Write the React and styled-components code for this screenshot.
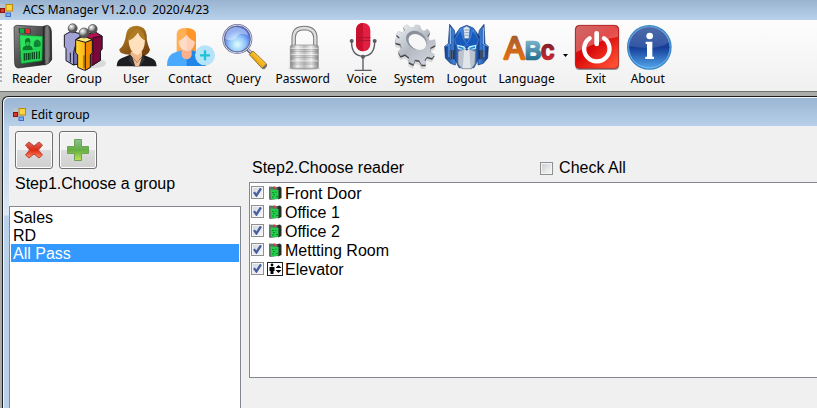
import React, { useState } from 'react'
import styled, { createGlobalStyle } from 'styled-components';

const GlobalStyle = createGlobalStyle`
    body {
        margin: 0;
        background: #a9aca9;
        font-family: "Noto Sans", "Open Sans", sans-serif;
        color: #000;
    }
`;

const MainWindow = styled.div`
    display: flex;
    flex-direction: column;
    min-height: 100vh;
`;

const TitleBar = styled.header`
    display: flex;
    align-items: center;
    gap: 10px;
    height: 20px;
    background: linear-gradient(#99b4d1, #b9d1ea);
    font-size: 12px;
    line-height: 20px;
    white-space: pre;
`;

const ToolBar = styled.nav`
    display: flex;
    height: 71px;
    background: linear-gradient(#fdfdfd, #f0f0f0);
    border-bottom: 1px solid #6f726f;
`;

const Grip = styled.div`
    width: 2px;
    height: 60px;
    margin: 4px 4px 0 0;
    background: repeating-linear-gradient(#b4b4b4 0 2px, transparent 2px 4px);
`;

const ToolButton = styled.button`
    display: flex;
    flex-direction: column;
    align-items: center;
    min-width: 52px;
    padding: 3px 6px 0;
    border: 0;
    background: none;
    font-family: inherit;
    font-size: 12px;
    line-height: 16px;
    color: #000;

    svg {
        width: 48px;
        height: 48px;
        margin: 0 -4px;
    }
`;

const DropArrow = styled.button`
    width: 9px;
    padding: 0;
    border: 0;
    background: none;

    svg {
        display: block;
        margin: 0 auto;
    }
`;

const ChildWindow = styled.section`
    flex: 1;
    display: flex;
    flex-direction: column;
    margin: 4px 0 0 2px;
    padding-left: 6px;
    border: solid #1c1c1c;
    border-width: 1px 0 0 1px;
    border-radius: 6px 0 0 0;
    background: linear-gradient(#99b4d1, #b9d1ea 30px, #dce8f5 118px, #b9d1ea 119px);
    box-shadow: inset 1px 1px #f4f8fc;
`;

const ChildTitle = styled.h1`
    display: flex;
    align-items: center;
    gap: 5px;
    height: 29px;
    margin: 0;
    padding: 6px 0 0 4px;
    box-sizing: border-box;
    font-size: 12px;
    font-weight: normal;
`;

const Content = styled.div`
    flex: 1;
    display: flex;
    gap: 8px;
    background: #f0f0f0;
    font-family: "Liberation Sans", Arial, sans-serif;
    font-size: 16px;
`;

const GroupPane = styled.div`
    display: flex;
    flex-direction: column;
    width: 232px;
`;

const ButtonRow = styled.div`
    display: flex;
    gap: 6px;
    padding: 5px 6px 0;
`;

const ActionButton = styled.button`
    display: flex;
    align-items: center;
    justify-content: center;
    width: 38px;
    height: 38px;
    padding: 0;
    border: 1px solid #707070;
    border-radius: 3px;
    background: linear-gradient(#f2f2f2 50%, #dddddd 50%, #cfcfcf);
    box-shadow: inset 0 0 0 1px #fcfcfc;
`;

const StepLabel = styled.div`
    padding-left: ${props => props.$indent}px;
    line-height: 18px;
`;

const GroupLabel = styled(StepLabel)`
    margin: 6px 0 13px;
`;

const GroupList = styled.div`
    flex: 1;
    display: flex;
    flex-direction: column;
    padding: 1px;
    border: 1px solid #828790;
    border-bottom: 0;
    background: #fff;
`;

const GroupOption = styled.button`
    height: 18px;
    padding: 1px 2px 0;
    border: 0;
    background: ${props => props.$selected ? '#3399ff' : 'none'};
    color: ${props => props.$selected ? '#fff' : '#000'};
    font: inherit;
    line-height: 18px;
    text-align: left;
`;

const ReaderPane = styled.div`
    flex: 1;
    display: flex;
    flex-direction: column;
`;

const ReaderHeader = styled.div`
    display: flex;
    align-items: center;
    gap: 136px;
    padding: 33px 0 5px;
`;

const CheckLabel = styled.label`
    display: flex;
    align-items: center;
    gap: 6px;
    line-height: 18px;
`;

const CheckBox = styled.input`
    appearance: none;
    width: 13px;
    height: 13px;
    margin: 0;
    border: 1px solid #8e8f8f;
    background: linear-gradient(135deg, #cbcfd5, #f6f6f6) content-box;
    padding: 1px;
    box-shadow: inset 0 0 0 1px #f4f4f4;

    &:checked {
        background: url("data:image/svg+xml,%3Csvg xmlns='http://www.w3.org/2000/svg' viewBox='0 0 11 11'%3E%3Cpath d='M2.5 5.2 4.6 8 8.4 2' fill='none' stroke='%23485f9f' stroke-width='2'/%3E%3C/svg%3E") border-box, linear-gradient(135deg, #d3d8e2, #f6f6f6) content-box;
    }
`;

const ReaderList = styled.div`
    height: 192px;
    padding: 1px;
    border: 1px solid #828790;
    border-right: 0;
    background: #fff;
`;

const ReaderRow = styled.label`
    display: flex;
    align-items: center;
    height: 19px;

    ${CheckBox} {
        margin-bottom: 2px;
    }

    svg {
        margin: 0 2px 2px 3px;
    }
`;

const FormIcon = () => (
    <svg width="13" height="13" viewBox="0 0 13 13">
        <rect width="13" height="13" fill="#c9c7c4" opacity=".5" />
        <rect x=".5" y="4.5" width="4" height="4" fill="#d5392b" stroke="#8c1410" />
        <rect x="6" y=".5" width="6.5" height="6.5" fill="#fbd343" stroke="#b98a10" />
        <rect x="6" y="9" width="4.5" height="3.5" fill="#79aef5" stroke="#3a6fd0" />
    </svg>
);

const ReaderIcon = () => (
    <svg viewBox="22 69 144 144">
        <defs>
            <linearGradient id="readerBody" x2="1" y2="1">
                <stop stopColor="#8d8d8d" /><stop offset=".5" stopColor="#4e4e4e" /><stop offset="1" stopColor="#222" />
            </linearGradient>
            <linearGradient id="readerSide">
                <stop stopColor="#1c1c1c" /><stop offset=".45" stopColor="#8a8a8a" /><stop offset="1" stopColor="#161616" />
            </linearGradient>
        </defs>
        <path d="M48 76 128 80 130 194 52 204Q42 202 42 190L40 82Q42 77 48 76Z" fill="url(#readerBody)" stroke="#222" strokeWidth="2" />
        <path d="M128 79 140 76Q150 78 152 94L153 178Q148 192 130 195Z" fill="url(#readerSide)" stroke="#181818" strokeWidth="2" />
        <path d="M133 83 146 90 147 172 133 181Z" fill="#777" opacity=".7" />
        <path d="M54 84 90 86 90 102 55 100Z" fill="#333" />
        <path d="M57 85 71 86 71 100 58 99Z" fill="#19aa44" />
        <path d="M74 86 87 87 88 100 75 100Z" fill="#ef3032" />
        <path d="M57 105 126 109 124 182 61 191Z" fill="#23d453" stroke="#07802c" strokeWidth="2" />
        <path d="M58 106 125 110 101 144 60 152Z" fill="#35ef66" opacity=".55" />
        <path d="M66 151Q65 138 76 137 70 124 75 117 82 111 88 118 92 127 86 136 97 139 96 150Z" fill="#087b2b" />
        <path d="M75 128Q81 122 87 128 87 136 81 138 75 136 75 128Z" fill="#30bd50" />
        <path d="M101 140Q98 120 111 120 121 123 118 138Z M105 137Q103 125 111 125 M110 139V129" fill="#13913c" stroke="#08692a" strokeWidth="2" />
        <path d="M71 160V182M77 159V181M83 159V180M88 158V179M95 157V178M101 156V178M108 155V177M116 154V176" stroke="#08491d" strokeWidth="4" />
    </svg>
);

const GroupIcon = () => (
    <svg viewBox="180 69 144 144">
        <defs>
            <radialGradient id="ball" cx=".35" cy=".3"><stop stopColor="#fff" /><stop offset=".6" stopColor="#aaa" /><stop offset="1" stopColor="#555" /></radialGradient>
            <linearGradient id="orange"><stop stopColor="#ffd530" /><stop offset="1" stopColor="#ff9c00" /></linearGradient>
        </defs>
        <ellipse cx="280" cy="190" rx="38" ry="15" fill="#aaa" opacity=".35" />
        <g stroke="#1b1821" strokeWidth="3" strokeLinejoin="round">
            <path d="M251 106 286 96 306 108V148L301 152V181L275 198 252 176Z" fill="#b60f52" />
            <path d="M279 113 306 108V148L301 152V181L279 195Z" fill="#7c0839" />
            <path d="M193 105 213 94 248 103V149L243 190 220 195 198 182V146L193 140Z" fill="#a2a2d5" />
            <path d="M232 115 248 104V145L238 192 221 194 221 157Z" fill="#7373b2" />
            <path d="M211 158V187" />
            <path d="M227 119 251 108 277 119V158L271 164V202L253 211 233 202V164L227 159Z" fill="url(#orange)" />
            <path d="M256 126 277 119V158L271 164V202L256 211Z" fill="#f18900" />
            <path d="M227 119 251 108 277 119 256 127Z" fill="#ffe87a" />
            <path d="M252 166V204" strokeWidth="2" />
        </g>
        <circle cx="218" cy="85" r="13.5" fill="url(#ball)" stroke="#444" strokeWidth="2" />
        <circle cx="278" cy="87" r="13.5" fill="url(#ball)" stroke="#444" strokeWidth="2" />
        <circle cx="252" cy="99" r="15" fill="url(#ball)" stroke="#444" strokeWidth="2" />
    </svg>
);

const UserIcon = () => (
    <svg viewBox="336 69 144 144">
        <defs><linearGradient id="hair" x2=".6" y2="1"><stop stopColor="#bd8b2b" /><stop offset="1" stopColor="#78430f" /></linearGradient></defs>
        <path d="M379 100Q383 77 411 77 438 80 440 105 439 126 450 149 447 164 425 169L376 163Q357 160 358 148 374 138 379 100Z" fill="url(#hair)" />
        <path d="M392 155H426V177L410 192 391 176Z" fill="#edb889" />
        <path d="M350 199Q350 180 366 174L390 164 412 188 430 164 455 175Q469 180 470 199Z" fill="#1c1d21" />
        <path d="M391 164 411 188 430 164 434 181 419 199H401L385 181Z" fill="#303137" />
        <path d="M397 171 411 188 426 171 417 199H406Z" fill="#f1bd91" />
        <path d="M385 118Q399 117 414 96 421 116 435 119 435 153 412 166 387 158 385 118Z" fill="#ffe0bd" />
        <path d="M384 123Q386 95 411 86 434 91 436 122 422 115 414 97 403 116 384 123Z" fill="#b07b25" />
    </svg>
);

const ContactIcon = () => (
    <svg viewBox="498 69 144 144" overflow="visible">
        <path d="M530 165V101Q530 84 559 84 589 86 588 105V166L559 174Z" fill="#ffb055" />
        <path d="M559 84Q589 86 588 105V166L559 174Z" fill="#ff9628" />
        <path d="M501 198Q500 165 526 157L545 151H575L596 158Q616 167 617 198Z" fill="#48a9ff" />
        <path d="M560 151H575L596 158Q616 167 617 198H560Z" fill="#2085e7" />
        <path d="M545 143H575V163Q575 177 560 178 545 176 545 162Z" fill="#ffb08b" />
        <path d="M536 124Q552 116 559 104 568 118 584 125 583 150 560 154 537 149 536 124Z" fill="#ffdcc9" />
        <path d="M560 104Q568 118 584 125 583 150 560 154Z" fill="#ffd0b6" />
        <circle cx="615" cy="166" r="30" fill="#b4e3fa" />
        <path d="M615 151V181M600 166H630" stroke="#1fc3d3" strokeWidth="7" />
    </svg>
);

const QueryIcon = () => (
    <svg viewBox="180 69 144 144">
        <defs>
            <radialGradient id="lens" cx=".5" cy=".7"><stop stopColor="#e0ffff" /><stop offset=".6" stopColor="#91c5fa" /><stop offset="1" stopColor="#537ee8" /></radialGradient>
            <linearGradient id="handle" x1="1" x2="0" y2="1"><stop stopColor="#ffef86" /><stop offset=".5" stopColor="#f4b51d" /><stop offset="1" stopColor="#a85c05" /></linearGradient>
        </defs>
        <path d="M259 145 278 163" stroke="#62627c" strokeWidth="10" />
        <path d="M261 145 278 161" stroke="#d5d6e5" strokeWidth="4" />
        <path d="M268 164 279 153 320 192Q322 199 313 207L306 205Z" fill="url(#handle)" stroke="#765014" strokeWidth="2" />
        <path d="M305 205 318 191 321 197 312 207Z" fill="#747181" />
        <circle cx="232" cy="117" r="41" fill="url(#lens)" stroke="#626891" strokeWidth="8" />
        <circle cx="232" cy="117" r="42" fill="none" stroke="#d6d9ed" strokeWidth="3" />
        <path d="M196 116Q196 87 225 81 259 82 265 108 240 93 229 113 214 127 196 116Z" fill="#fff" opacity=".4" />
    </svg>
);

const PasswordIcon = () => (
    <svg viewBox="354 69 144 144">
        <defs><linearGradient id="steel"><stop stopColor="#888" /><stop offset=".25" stopColor="#eee" /><stop offset=".5" stopColor="#bbb" /><stop offset=".75" stopColor="#eee" /><stop offset="1" stopColor="#888" /></linearGradient></defs>
        <ellipse cx="430" cy="205" rx="48" ry="5" fill="#888" opacity=".4" />
        <path d="M398 142V112Q399 84 430 84 462 85 463 112V142" fill="none" stroke="#777" strokeWidth="13" />
        <path d="M398 142V112Q399 84 430 84 462 85 463 112V142" fill="none" stroke="#ddd" strokeWidth="7" />
        <rect x="388" y="135" width="84" height="70" rx="5" fill="url(#steel)" stroke="#898989" strokeWidth="2" />
        <path d="M389 148H471M389 154H471M389 167H471M389 173H471M389 186H471M389 192H471" stroke="#777" strokeWidth="2" opacity=".55" />
        <path d="M389 145H471M389 164H471M389 183H471" stroke="#fff" strokeWidth="3" opacity=".6" />
    </svg>
);

const VoiceIcon = () => (
    <svg viewBox="51 69 144 144">
        <path d="M92 123Q90 167 126 169 162 167 161 123" fill="none" stroke="#595c62" strokeWidth="4" />
        <path d="M126 169V211M101 211H152" stroke="#595c62" strokeWidth="4" />
        <circle cx="92" cy="123" r="6" fill="#595c62" /><circle cx="161" cy="123" r="6" fill="#595c62" /><circle cx="126" cy="170" r="6" fill="#595c62" />
        <rect x="105" y="69" width="43" height="85" rx="21" fill="#e11f43" />
        <path d="M126 69Q105 70 105 91V132Q106 153 126 154Z" fill="#c9102d" />
        <path d="M105 113H148M105 122H148" stroke="#a91631" strokeWidth="3" />
    </svg>
);

const gearPath = 'M225 103 232 94 244 98 251 91 247 80 258 74 269 83 280 82 284 74 297 77 299 88 309 94 319 87 327 97 320 109 325 122 342 119 343 135 328 143 329 156 341 164 333 174 318 170 311 180 315 194 302 194 294 181 282 179 277 193 263 186 264 172 252 163 239 168 231 155 241 144 238 132 223 128 224 116 237 114Z';

const SystemIcon = () => (
    <svg viewBox="207 69 144 144">
        <defs><linearGradient id="gear" x2=".8" y2="1"><stop stopColor="#f1f4f7" /><stop offset=".55" stopColor="#b3b9c3" /><stop offset="1" stopColor="#d0d4dc" /></linearGradient></defs>
        <path d={gearPath} fill="#999" opacity=".3" transform="translate(-1 13)" />
        <path d={gearPath} fill="#404347" transform="translate(0 5)" />
        <path d={gearPath} fill="url(#gear)" stroke="#a3a8af" strokeWidth="1" />
        <ellipse cx="286" cy="121" rx="33" ry="26" transform="rotate(35 286 121)" fill="#8b919b" />
        <ellipse cx="289" cy="126" rx="29" ry="21" transform="rotate(35 289 126)" fill="#f7f7f7" />
    </svg>
);

const LogoutIcon = () => (
    <svg viewBox="366 69 144 144">
        <defs><linearGradient id="helm"><stop stopColor="#123e91" /><stop offset=".25" stopColor="#498ee0" /><stop offset=".5" stopColor="#1a55b9" /><stop offset=".8" stopColor="#3c7fda" /><stop offset="1" stopColor="#123476" /></linearGradient></defs>
        <path d="M386 73 400 91 405 122 403 195 388 190 373 174 371 139 382 131ZM489 73 475 91 469 122 471 195 487 190 500 174 502 139 492 131Z" fill="url(#helm)" stroke="#12336f" strokeWidth="2" />
        <path d="M388 83V132M487 83V132" stroke="#9dcaff" strokeWidth="3" />
        <path d="M400 109 417 84 437 76 457 84 475 109 474 174 459 203H414L400 174Z" fill="url(#helm)" stroke="#173e84" strokeWidth="2" />
        <path d="M401 118 419 91 427 117 437 131 447 117 455 91 473 118 468 135 445 140 437 132 428 140 405 135Z" fill="#1759bc" stroke="#4f8fdd" strokeWidth="2" />
        <path d="M426 84 437 78 447 84 444 116H430Z" fill="#dce8f4" stroke="#3f659f" strokeWidth="2" />
        <path d="M430 90H444M430 98H444M431 106H443" stroke="#6887ad" strokeWidth="2" />
        <path d="M408 134 429 139 435 146 430 151 411 147ZM445 139 466 134 464 147 444 151 439 146Z" fill="#d9f4ff" />
        <path d="M412 138 430 144 425 147 413 144ZM444 144 462 138 462 144 449 147Z" fill="#1688df" />
        <path d="M411 154 430 147 437 152 445 147 464 154 462 192 452 206H423L411 192Z" fill="#bbc4ce" stroke="#58677c" strokeWidth="2" />
        <path d="M430 147 437 152 445 147 449 205H425Z" fill="#e1e5e9" />
        <path d="M383 151H400V178H386ZM474 151H492L488 178H474Z" fill="#25344f" />
        <path d="M389 151V178M395 151V178M480 151V178M486 151V178" stroke="#6d82a2" strokeWidth="2" />
        <path d="M373 139 384 133V171M501 139 489 133V171" fill="none" stroke="#69aaf0" strokeWidth="3" />
    </svg>
);

const LanguageIcon = () => (
    <svg viewBox="36 69 144 144" fontFamily="Liberation Sans, sans-serif" overflow="visible">
        <defs>
            <linearGradient id="letterA" gradientUnits="userSpaceOnUse" x1="0" x2="0" y1="108" y2="178"><stop stopColor="#a65c2f" /><stop offset="1" stopColor="#e4700f" /></linearGradient>
            <linearGradient id="letterB" gradientUnits="userSpaceOnUse" x1="0" x2="0" y1="118" y2="178"><stop stopColor="#82b7ce" /><stop offset="1" stopColor="#28718f" /></linearGradient>
            <linearGradient id="letterC" gradientUnits="userSpaceOnUse" x1="0" x2="0" y1="128" y2="178"><stop stopColor="#7e1e25" /><stop offset="1" stopColor="#c72a2f" /></linearGradient>
        </defs>
        <text x="40" y="176" strokeWidth="7" strokeLinejoin="round">
            <tspan fontSize="92" fill="url(#letterA)" stroke="url(#letterA)">A</tspan>
            <tspan fontSize="74" fill="url(#letterB)" stroke="url(#letterB)">B</tspan>
            <tspan fontSize="76" fill="url(#letterC)" stroke="url(#letterC)">c</tspan>
        </text>
    </svg>
);

const ExitIcon = () => (
    <svg viewBox="246 69 144 144">
        <defs><linearGradient id="exitRed" x2=".8" y2="1"><stop stopColor="#b83232" /><stop offset=".5" stopColor="#d90707" /><stop offset="1" stopColor="#ff5034" /></linearGradient></defs>
        <rect x="256" y="78" width="131" height="132" rx="12" fill="#555" opacity=".6" />
        <rect x="256" y="76" width="130" height="129" rx="12" fill="url(#exitRed)" stroke="#a51010" strokeWidth="2" />
        <path d="M258 89Q258 78 269 78H373Q384 78 384 89V110Q335 118 258 157Z" fill="#fff" opacity=".28" />
        <path d="M299 115A38 38 0 1 0 342 115" fill="none" stroke="#fff" strokeWidth="13" strokeLinecap="round" />
        <path d="M320 100V132" stroke="#fff" strokeWidth="14" strokeLinecap="round" />
    </svg>
);

const AboutIcon = () => (
    <svg viewBox="402 69 144 144">
        <defs><linearGradient id="aboutBlue" x2="0" y2="1"><stop stopColor="#35569c" /><stop offset=".5" stopColor="#153d98" /><stop offset="1" stopColor="#55a9ed" /></linearGradient></defs>
        <circle cx="478" cy="142" r="65" fill="url(#aboutBlue)" stroke="#3487cb" strokeWidth="4" />
        <circle cx="478" cy="142" r="62" fill="none" stroke="#8dccf4" strokeWidth="2" />
        <path d="M419 139Q418 83 478 81 536 86 538 127 500 154 419 139Z" fill="#fff" opacity=".13" />
        <circle cx="479" cy="108" r="10" fill="#fff" />
        <path d="M467 125H487V170H492V177H466V170H471V132H467Z" fill="#fff" />
    </svg>
);

const DeviceIcon = () => (
    <svg width="16" height="16" viewBox="0 0 16 16">
        <path d="M2 1.5 11 2 11 14 3 15 2 14Z" fill="#6b6e6b" />
        <path d="M10.5 2 13 1.5 14.5 3V13L11 14.5Z" fill="#2b2d2b" />
        <path d="M3.5 4.5 11.5 5 11.5 13.5 4 14.5Z" fill="#22cf4a" />
        <path d="M4 3H6" stroke="#18943a" />
        <path d="M6.5 2.5H8" stroke="#e8303c" strokeWidth="2" />
        <path d="M5 7.5H7M9 6.5V8M6 9.5H8M5 12H7M9 11.5H11" stroke="#0d8a30" />
    </svg>
);

const ElevatorIcon = () => (
    <svg width="16" height="16" viewBox="0 0 16 16">
        <rect x=".5" y="1.5" width="15" height="13" fill="#fff" stroke="#222" />
        <circle cx="5" cy="4" r="1.4" />
        <path d="M2.5 6H7.5V10H6.5V13H3.5V10H2.5ZM8.5 7 11.5 4 14.5 7ZM8.5 9 11.5 12 14.5 9Z" />
    </svg>
);

const TOOLS = [
    { title: 'Reader', Icon: ReaderIcon },
    { title: 'Group', Icon: GroupIcon },
    { title: 'User', Icon: UserIcon },
    { title: 'Contact', Icon: ContactIcon },
    { title: 'Query', Icon: QueryIcon },
    { title: 'Password', Icon: PasswordIcon },
    { title: 'Voice', Icon: VoiceIcon },
    { title: 'System', Icon: SystemIcon },
    { title: 'Logout', Icon: LogoutIcon },
    { title: 'Language', Icon: LanguageIcon, menu: true },
    { title: 'Exit', Icon: ExitIcon },
    { title: 'About', Icon: AboutIcon },
];

const GROUPS = ['Sales', 'RD', 'All Pass'];

const READERS = [
    { name: 'Front Door', Icon: DeviceIcon },
    { name: 'Office 1', Icon: DeviceIcon },
    { name: 'Office 2', Icon: DeviceIcon },
    { name: 'Mettting Room', Icon: DeviceIcon },
    { name: 'Elevator', Icon: ElevatorIcon },
];

export default function App() {
    const [group, setGroup] = useState('All Pass');

    return (
        <MainWindow>
            <GlobalStyle />
            <TitleBar>
                <FormIcon />
                <span>{'ACS Manager V1.2.0.0  2020/4/23'}</span>
            </TitleBar>
            <ToolBar>
                <Grip />
                {TOOLS.map(({ title, Icon, menu }) => (
                    <React.Fragment key={title}>
                        <ToolButton>
                            <Icon />
                            {title}
                        </ToolButton>
                        {menu && (
                            <DropArrow aria-label="Language list">
                                <svg width="5" height="3" viewBox="0 0 5 3"><path d="M0 0H5L2.5 3Z" /></svg>
                            </DropArrow>
                        )}
                    </React.Fragment>
                ))}
            </ToolBar>
            <ChildWindow>
                <ChildTitle><FormIcon />Edit group</ChildTitle>
                <Content>
                    <GroupPane>
                        <ButtonRow>
                            <ActionButton aria-label="Delete group">
                                <svg width="20" height="20" viewBox="0 0 20 20">
                                    <defs><linearGradient id="cross" x2="0" y2="1"><stop stopColor="#d66a60" /><stop offset=".5" stopColor="#e02a10" /><stop offset="1" stopColor="#ff8a63" /></linearGradient></defs>
                                    <path d="M5 2 10 6 15 2 18.500 5 14.500 10 18.500 15 15 18 10 14 5 18 1.500 15 5.500 10 1.500 5Z" fill="url(#cross)" stroke="#b8493c" />
                                </svg>
                            </ActionButton>
                            <ActionButton aria-label="Add group">
                                <svg width="24" height="24" viewBox="0 0 24 24">
                                    <defs><linearGradient id="plus" x2="0" y2="1"><stop stopColor="#8fbf95" /><stop offset=".5" stopColor="#65ae43" /><stop offset="1" stopColor="#bce352" /></linearGradient></defs>
                                    <path d="M8.5 1.5H15.5V8.5H22.5V15.5H15.5V22.5H8.5V15.5H1.5V8.5H8.5Z" fill="url(#plus)" stroke="#6aa557" />
                                </svg>
                            </ActionButton>
                        </ButtonRow>
                        <GroupLabel $indent={6}>Step1.Choose a group</GroupLabel>
                        <GroupList>
                            {GROUPS.map(name => (
                                <GroupOption key={name} $selected={name === group} onClick={() => setGroup(name)}>
                                    {name}
                                </GroupOption>
                            ))}
                        </GroupList>
                    </GroupPane>
                    <ReaderPane>
                        <ReaderHeader>
                            <StepLabel $indent={3}>Step2.Choose reader</StepLabel>
                            <CheckLabel><CheckBox type="checkbox" />Check All</CheckLabel>
                        </ReaderHeader>
                        <ReaderList>
                            {READERS.map(({ name, Icon }) => (
                                <ReaderRow key={name}>
                                    <CheckBox type="checkbox" defaultChecked />
                                    <Icon />
                                    {name}
                                </ReaderRow>
                            ))}
                        </ReaderList>
                    </ReaderPane>
                </Content>
            </ChildWindow>
        </MainWindow>
    )
}
